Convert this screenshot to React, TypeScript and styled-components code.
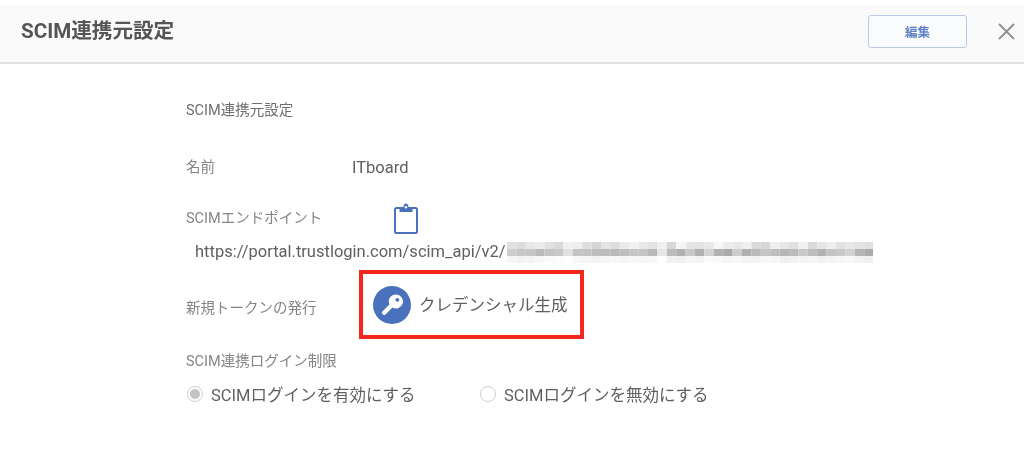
import React from "react";
import styled, { createGlobalStyle } from "styled-components";

const Global = createGlobalStyle`
  html, body { margin: 0; padding: 0; background: #fff; }
  body { font-family: Roboto, "Noto Sans CJK JP", sans-serif; }
`;

const Page = styled.div`
  width: 1024px;
  height: 457px;
  overflow: hidden;
  padding-top: 5px;
  box-sizing: border-box;
  background: #fff;
  filter: blur(0.45px);
`;

const Header = styled.header`
  height: 52px;
  padding: 0 9px 5px 21px;
  box-sizing: content-box;
  background: #fafafa;
  border-bottom: 2px solid #e2e2e2;
  display: flex;
  align-items: center;
`;

const Title = styled.h1`
  flex: 1;
  margin: 0;
  font-size: 20.6px;
  font-weight: 700;
  color: #555;
  line-height: 50px;
`;

const EditButton = styled.button`
  width: 99px;
  height: 33px;
  margin-right: 31px;
  padding: 0;
  background: #fafbfd;
  border: 1px solid #b9c9e6;
  border-radius: 3px;
  color: #5f82c4;
  font-family: inherit;
  font-size: 12.5px;
  font-weight: 700;
`;

const Close = styled.svg`
  width: 17px;
  height: 17px;
  display: block;
`;

const Body = styled.main`
  display: flex;
  flex-direction: column;
  padding: 37px 0 0 186px;
`;

const Label = styled.div`
  font-size: 14.5px;
  line-height: 20px;
  color: #858585;
`;

const Heading = styled(Label)`
  color: #6e6e6e;
  margin-bottom: 37px;
`;

const Row = styled.div<{ $h: number; $mb?: number }>`
  display: flex;
  align-items: center;
  height: ${(p) => p.$h}px;
  margin-bottom: ${(p) => p.$mb ?? 0}px;
`;

const LabelCell = styled(Label)<{ $w: number; $drop?: number }>`
  width: ${(p) => p.$w}px;
  flex: none;
  padding-top: ${(p) => p.$drop ?? 0}px;
  white-space: nowrap;
`;

const Value = styled.div`
  font-size: 16.5px;
  line-height: 20px;
  color: #606060;
`;

const UrlRow = styled.div`
  display: flex;
  align-items: center;
  height: 24px;
  padding-left: 9px;
  margin-bottom: 6px;
`;

const Url = styled(Value)`
  white-space: nowrap;
`;

const Masked = styled.svg`
  width: 366px;
  height: 22px;
  flex: none;
  display: block;
  margin-left: 1px;
  filter: blur(0.6px);
`;

const Highlight = styled.div`
  width: 225px;
  height: 69px;
  box-sizing: border-box;
  border: 4px solid #f5281e;
  display: flex;
  align-items: center;
  gap: 8px;
  padding-left: 10px;
  flex: none;
`;

const KeyCircle = styled.span`
  width: 38px;
  height: 38px;
  border-radius: 50%;
  background: #4a71bb;
  display: flex;
  align-items: center;
  justify-content: center;
  flex: none;
`;

const ActionText = styled.span`
  font-size: 16.5px;
  color: #606060;
  white-space: nowrap;
  position: relative;
  top: -1px;
`;

const LimitLabel = styled(Label)`
  margin-top: 13px;
`;

const RadioRow = styled.div`
  display: flex;
  align-items: center;
  margin-top: 10px;
  height: 24px;
`;

const RadioItem = styled.label<{ $w: number }>`
  display: flex;
  align-items: center;
  gap: 8px;
  width: ${(p) => p.$w}px;
  padding-left: 1px;
  box-sizing: border-box;
  font-size: 16.5px;
  color: #606060;
  white-space: nowrap;
`;

const RadioDot = styled.span<{ $on?: boolean }>`
  width: 16px;
  height: 16px;
  box-sizing: border-box;
  border-radius: 50%;
  border: 1px solid #cfcfcf;
  background: #fff;
  display: flex;
  align-items: center;
  justify-content: center;
  flex: none;
  &::after {
    content: "";
    width: 10px;
    height: 10px;
    border-radius: 50%;
    background: ${(p) => (p.$on ? "#c4c4c4" : "transparent")};
  }
`;

const shades = [
  [225,220,232,236,225,218,240,238,222,214,228,222,235,240,232,226,240,215,245,230,226,232,246,236,232,240,218,215,238,232,225,240,218,230,238,226,232,226,224],
  [205,200,198,186,196,200,225,196,194,190,188,186,190,198,196,184,230,188,176,200,178,210,178,170,206,176,186,196,190,182,188,200,190,178,196,200,210,180,172],
  [246,242,244,248,250,252,254,248,246,244,246,248,246,248,246,248,254,242,240,246,244,250,250,246,248,244,244,248,246,240,242,244,246,242,244,246,248,244,240],
];

const App: React.FC = () => (
  <Page>
    <Global />
    <Header>
      <Title>SCIM連携元設定</Title>
      <EditButton>編集</EditButton>
      <Close viewBox="0 0 17 17" aria-label="閉じる">
        <path d="M1 1 L16 16 M16 1 L1 16" stroke="#8f8f8f" strokeWidth="1.8" fill="none" />
      </Close>
    </Header>
    <Body>
      <Heading>SCIM連携元設定</Heading>
      <Row $h={20} $mb={25}>
        <LabelCell $w={166}>名前</LabelCell>
        <Value>ITboard</Value>
      </Row>
      <Row $h={31} $mb={6}>
        <LabelCell $w={208}>SCIMエンドポイント</LabelCell>
        <svg width="24" height="31" viewBox="0 0 24 31" fill="none">
          <rect x="1" y="5" width="22" height="25" rx="1.5" stroke="#4a71bb" strokeWidth="2" />
          <path d="M5.5 9 V4 H9.5 Q9.8 0.5 12 0.5 Q14.2 0.5 14.5 4 H18.5 V9 Z" fill="#4a71bb" />
          <circle cx="12" cy="4.2" r="1.2" fill="#fff" />
        </svg>
      </Row>
      <UrlRow>
        <Url>https://portal.trustlogin.com/scim_api/v2/</Url>
        <Masked viewBox="0 0 366 22" aria-hidden="true">
          {shades.map((row, r) =>
            row.map((v, c) => (
              <rect
                key={`${r}-${c}`}
                x={c * 9.4}
                y={r * 7 + 1}
                width="9.4"
                height="7"
                fill={`rgb(${v},${v},${v})`}
              />
            ))
          )}
        </Masked>
      </UrlRow>
      <Row $h={69}>
        <LabelCell $w={173} $drop={8}>新規トークンの発行</LabelCell>
        <Highlight>
          <KeyCircle>
            <svg width="26" height="26" viewBox="0 0 26 26" fill="none">
              <path
                d="M17 2.5 a7 7 0 1 1 -3.6 13 L6.5 22.5 Q5.3 23.6 4 22.4 L3.4 21.8 Q2.3 20.6 3.4 19.4 L10.4 12.4 A7 7 0 0 1 17 2.5 Z"
                fill="#fff"
              />
              <circle cx="18.3" cy="7.8" r="1.9" fill="#4a71bb" />
            </svg>
          </KeyCircle>
          <ActionText>クレデンシャル生成</ActionText>
        </Highlight>
      </Row>
      <LimitLabel>SCIM連携ログイン制限</LimitLabel>
      <RadioRow>
        <RadioItem $w={293}>
          <RadioDot $on />
          SCIMログインを有効にする
        </RadioItem>
        <RadioItem $w={260}>
          <RadioDot />
          SCIMログインを無効にする
        </RadioItem>
      </RadioRow>
    </Body>
  </Page>
);

export default App;
